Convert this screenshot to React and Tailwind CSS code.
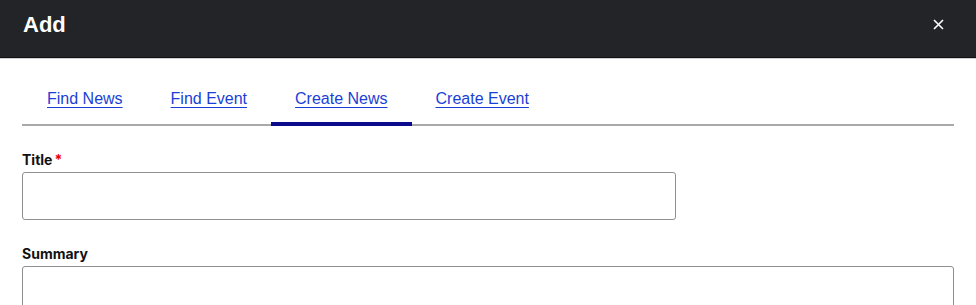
import { useState } from "react";

const tabs = ["Find News", "Find Event", "Create News", "Create Event"];

export default function App() {
  const [active, setActive] = useState("Create News");

  return (
    <div className="w-[976px] h-[305px] overflow-hidden bg-white font-['Inter',sans-serif]">
      <header className="h-[58px] bg-[#232428] border-b border-b-[#111] flex items-center justify-between pl-[23px] pr-[32px] shadow-[0_1px_0_#d0d0d0]">
        <h1 className="text-white font-bold text-[22px] font-['Liberation_Sans',sans-serif] pb-[9px]">Add</h1>
        <button className="text-white pb-[8px]" aria-label="Close">
          <svg width="11" height="11" viewBox="0 0 11 11">
            <path d="M1 1L10 10M10 1L1 10" stroke="white" strokeWidth="1.6" />
          </svg>
        </button>
      </header>

      <div className="px-[22px]">
        <nav className="flex pl-[1px] border-b-2 border-[#a9a9a9] mt-[29px] font-['Liberation_Sans',sans-serif]">
          {tabs.map((t) => (
            <button
              key={t}
              onClick={() => setActive(t)}
              className={
                "px-6 pb-[11px] -mb-[2px] border-b-[4px] text-[16px] text-[#1a3fd6] underline underline-offset-[3px] " +
                (active === t ? "border-[#0b0a8c]" : "border-transparent")
              }
            >
              {t}
            </button>
          ))}
        </nav>

        <form className="pt-[25px]">
          <label className="block text-[14px] font-bold text-[#111] mb-[4px] leading-[17px]">
            Title<span className="text-[#e00] ml-[2px]">*</span>
          </label>
          <input
            type="text"
            className="block w-[654px] h-[48px] border border-[#8f8f94] rounded-[3px] px-3"
          />

          <label className="block text-[14px] font-bold text-[#111] mt-[25px] mb-[4px] leading-[17px]">
            Summary
          </label>
          <textarea className="block w-full h-[60px] border border-[#8f8f94] rounded-[3px] px-3 resize-none" />
        </form>
      </div>
    </div>
  );
}
